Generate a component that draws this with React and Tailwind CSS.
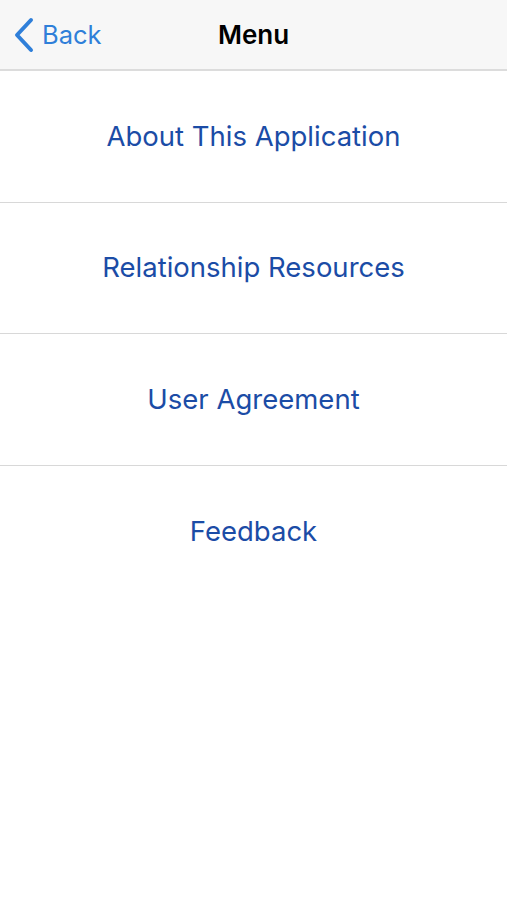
import React from 'react'

const items = ['About This Application', 'Relationship Resources', 'User Agreement', 'Feedback']

export default function App() {
  return (
    <div className="min-h-screen bg-white font-['Inter','Roboto',sans-serif]">
      {/* nav bar */}
      <div className="relative h-[71px] bg-[#f7f7f7] border-b-2 border-[#dcdcdc] flex items-center justify-center">
        <button className="absolute left-[12px] top-0 h-full flex items-center gap-[6px] text-[#2f7fd9]">
          <svg width="24" height="38" viewBox="0 0 24 38" fill="none">
            <path d="M19 4 L5 19 L19 34" stroke="#2f7fd9" strokeWidth="4" strokeLinecap="round" strokeLinejoin="round" />
          </svg>
          <span className="text-[25.5px] leading-none">Back</span>
        </button>
        <h1 className="text-[26px] font-semibold text-black leading-none">Menu</h1>
      </div>

      {items.map((label, i) => (
        <div
          key={label}
          className={`h-[131.5px] flex items-center justify-center ${i < items.length - 1 ? 'border-b border-[#d8d8d8]' : ''}`}
        >
          <span className="text-[27.5px] text-[#1b4ca6] leading-none">{label}</span>
        </div>
      ))}
    </div>
  )
}
